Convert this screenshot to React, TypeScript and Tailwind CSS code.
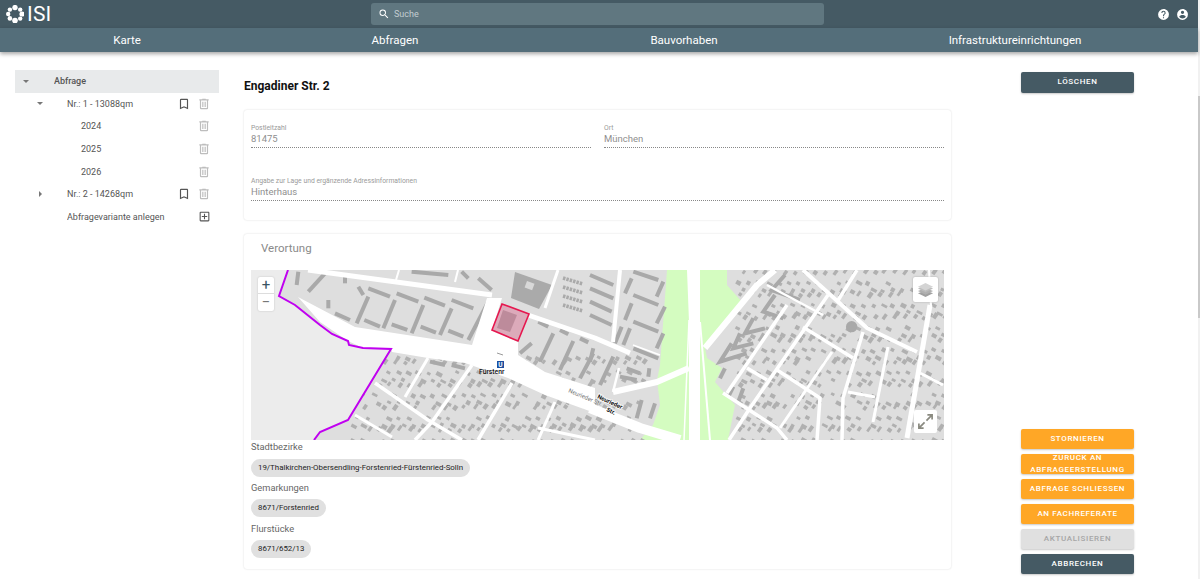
import React from 'react';

const ICONS = {
  trash: 'M9,3V4H4V6H5V19A2,2 0 0,0 7,21H17A2,2 0 0,0 19,19V6H20V4H15V3H9M7,6H17V19H7V6M9,8V17H11V8H9M13,8V17H15V8H13Z',
  bookmark: 'M17,18L12,15.82L7,18V5H17M17,3H7A2,2 0 0,0 5,5V21L12,18L19,21V5C19,3.89 18.1,3 17,3Z',
  plusBox: 'M19,19H5V5H19M19,3H5A2,2 0 0,0 3,5V19A2,2 0 0,0 5,21H19A2,2 0 0,0 21,19V5C21,3.89 20.1,3 19,3M11,7H13V11H17V13H13V17H11V13H7V11H11V7Z',
  help: 'M15.07,11.25L14.17,12.17C13.45,12.89 13,13.5 13,15H11V14.5C11,13.39 11.45,12.39 12.17,11.67L13.41,10.41C13.78,10.05 14,9.55 14,9C14,7.89 13.1,7 12,7A2,2 0 0,0 10,9H8A4,4 0 0,1 12,5A4,4 0 0,1 16,9C16,9.88 15.64,10.67 15.07,11.25M13,19H11V17H13M12,2A10,10 0 0,0 2,12A10,10 0 0,0 12,22A10,10 0 0,0 22,12C22,6.47 17.5,2 12,2Z',
  account: 'M12,19.2C9.5,19.2 7.29,17.92 6,16C6.03,14 10,12.9 12,12.9C14,12.9 17.97,14 18,16C16.71,17.92 14.5,19.2 12,19.2M12,5A3,3 0 0,1 15,8A3,3 0 0,1 12,11A3,3 0 0,1 9,8A3,3 0 0,1 12,5M12,2A10,10 0 0,0 2,12A10,10 0 0,0 12,22A10,10 0 0,0 22,12C22,6.47 17.5,2 12,2Z',
  magnify: 'M9.5,3A6.5,6.5 0 0,1 16,9.5C16,11.11 15.41,12.59 14.44,13.73L14.71,14H15.5L20.5,19L19,20.5L14,15.5V14.71L13.73,14.44C12.59,15.41 11.11,16 9.5,16A6.5,6.5 0 0,1 3,9.5A6.5,6.5 0 0,1 9.5,3M9.5,5C7,5 5,7 5,9.5C5,12 7,14 9.5,14C12,14 14,12 14,9.5C14,7 12,5 9.5,5Z',
};

function Mdi({ d, className }: { d: string; className: string }) {
  return (
    <svg viewBox="0 0 24 24" className={className} fill="currentColor">
      <path d={d} />
    </svg>
  );
}

function Logo() {
  const dots = [
    [9, 2.6, 2.7], [14.2, 4.6, 2.2], [16, 9, 2.6], [14.2, 13.6, 2.2],
    [9, 15.6, 2.8], [3.9, 13.4, 2.3], [2.2, 9, 2.2], [3.9, 4.6, 2.2],
  ];
  return (
    <svg viewBox="0 0 18 18" className="w-[18px] h-[18px]" fill="white">
      {dots.map(([x, y, r], i) => <circle key={i} cx={x} cy={y} r={r} />)}
    </svg>
  );
}

function TreeRow({ indent, caret, label, bold, bookmark, action = 'trash', active }: {
  indent: string;
  caret?: 'down' | 'right';
  label: string;
  bold?: boolean;
  bookmark?: boolean;
  action?: 'trash' | 'plus' | 'none';
  active?: boolean;
}) {
  return (
    <div className={`h-[22.6px] flex items-center text-[9px] text-[#555] ${active ? 'bg-[#e8eaeb]' : ''} ${bold ? 'font-medium' : ''}`}>
      <div className={`flex items-center ${indent}`}>
        <div className="w-[8px] flex justify-center">
          {caret === 'down' && <div className="w-0 h-0 border-x-[3px] border-x-transparent border-t-[3px] border-t-[#777]" />}
          {caret === 'right' && <div className="w-0 h-0 border-y-[3px] border-y-transparent border-l-[3px] border-l-[#777]" />}
        </div>
      </div>
      <span className="flex-1 truncate pt-[1.5px]">{label}</span>
      {bookmark && <Mdi d={ICONS.bookmark} className="w-[14px] h-[14px] text-[#555] mr-[6px]" />}
      {action === 'trash' && <Mdi d={ICONS.trash} className="w-[14px] h-[14px] text-[#bdbdbd] mr-[8px]" />}
      {action === 'plus' && <Mdi d={ICONS.plusBox} className="w-[13px] h-[13px] text-[#555] mr-[8px]" />}
    </div>
  );
}

function Field({ label, value, className }: { label: string; value: string; className: string }) {
  return (
    <div className={className}>
      <div className="text-[6.8px] leading-[9px] text-[#9a9a9a]">{label}</div>
      <div className="text-[9.5px] leading-[13px] -mt-[1px] text-[#8f8f8f]">{value}</div>
      <div className="mt-[2px] border-b border-dotted border-[#888]" />
    </div>
  );
}

function Chip({ children }: { children: React.ReactNode }) {
  return (
    <div className="self-start h-[18px] rounded-full bg-[#e0e0e0] px-[7px] flex items-center text-[7.9px] text-[#222]">
      {children}
    </div>
  );
}

function Btn({ children, kind = 'orange', leading }: { children: React.ReactNode; kind?: 'orange' | 'dark' | 'off'; leading?: boolean }) {
  const look = kind === 'orange'
    ? 'bg-[#ffa726] text-white'
    : kind === 'dark'
      ? 'bg-[#455a64] text-white'
      : 'bg-[#e0e0e0] text-[#a6a6a6]';
  return (
    <div className={`w-[113px] h-[20.5px] rounded-[2px] flex items-center justify-center text-center text-[8px] uppercase tracking-[0.08em] font-medium overflow-hidden shadow-[0_1px_2px_rgba(0,0,0,0.22)] ${leading ? 'leading-[12px]' : ''} ${look}`}>
      {children}
    </div>
  );
}

// deterministic house scatter for the map
function houses() {
  const out: React.ReactNode[] = [];
  let seed = 17;
  const rnd = () => {
    seed = (seed * 16807) % 2147483647;
    return seed / 2147483647;
  };
  const cols = 62;
  const rows = 24;
  for (let c = 0; c < cols; c++) {
    for (let r = 0; r < rows; r++) {
      const x = 100 + c * 10 + (r % 2) * 5 + rnd() * 2;
      const y = 2 + r * 7.5 + rnd() * 2;
      if (x > 693) continue;
      if (y < 82 && x < 470) continue;
      if (x > 395 && x < 482) continue;
      if (x > 340 && x < 400 && y > 110 && y < 130) continue;
      if (rnd() < 0.18) continue;
      const w = 3.5 + rnd() * 3;
      const h = 2.6 + rnd() * 1.8;
      const a = r % 3 === 0 ? -55 : 28;
      out.push(<rect key={`${c}-${r}`} x={x} y={y} width={w} height={h} transform={`rotate(${a} ${x} ${y})`} fill="#b0b0b0" />);
    }
  }
  return out;
}

const SLABS_LEFT = [
  [370, 95, 335, 175], [450, 105, 415, 190], [535, 120, 500, 205], [620, 130, 585, 210], [730, 110, 670, 225],
  [370, 70, 435, 95], [455, 85, 520, 110], [538, 98, 600, 122], [620, 105, 685, 130],
  [270, 145, 315, 165], [358, 165, 405, 185], [440, 178, 487, 195], [527, 185, 573, 203], [610, 197, 655, 215],
  [250, 105, 250, 130], [240, 25, 190, 80], [160, 20, 155, 60], [300, 30, 300, 55], [340, 65, 355, 90],
  [500, 20, 610, 30], [650, 20, 670, 40], [700, 40, 740, 75],
  [860, 235, 825, 265], [925, 205, 885, 290], [985, 228, 945, 315], [1045, 265, 1005, 340],
  [880, 170, 910, 185], [945, 195, 970, 208], [1005, 220, 1030, 232],
  [555, 290, 600, 300], [620, 300, 660, 310],
];

const SLABS_RIGHT = [
  [0, 30, 70, 60], [0, 70, 70, 100], [0, 110, 65, 140], [0, 150, 65, 180],
  [125, 40, 105, 85], [130, 20, 205, 45], [220, 50, 200, 95], [130, 90, 205, 120],
  [125, 115, 105, 165], [225, 125, 200, 175], [130, 170, 205, 200], [220, 205, 200, 250],
  [130, 250, 205, 280], [75, 235, 95, 185], [100, 240, 120, 190], [70, 275, 30, 360],
  [10, 250, 0, 290], [110, 310, 150, 325], [90, 335, 140, 345], [178, 310, 175, 335],
  [155, 405, 140, 460], [195, 415, 180, 460], [430, 365, 415, 395], [460, 370, 445, 410],
  [405, 310, 390, 340],
];

const U_SHAPES = [
  '585,30 545,75 630,105', '555,90 520,140 580,160', '490,160 465,205 525,190',
  '450,205 430,250 490,235', '425,235 390,290 470,265',
];

const ROADS: [string, number][] = [
  ['57,0 241,25', 5], ['277,45 344,68 379,83', 5], ['369,0 362,72', 4],
  ['362,122 406,112 438,98', 6], ['339,138 389,158 429,170', 10], ['368,98 362,122', 2.5], ['382,75 409,85', 1.5],
  ['524,0 506,15 454,78', 6], ['516,15 572,45', 2.5], ['552,0 616,58 666,82', 4], ['606,0 586,32', 3.5],
  ['536,35 476,123', 3.5], ['577,25 499,138 478,170', 3.5], ['552,57 602,88', 3.5], ['472,123 526,158 536,170', 3.5],
  ['496,98 516,110', 3.5], ['526,100 569,128 566,170', 3.5], ['581,82 529,158', 3], ['612,62 592,128 591,170', 3.5],
  ['679,35 656,168', 5], ['637,77 622,152', 3], ['597,122 624,127', 3], ['669,103 692,115', 3],
  ['177,88 154,127', 3], ['221,95 181,152 164,170', 3.5], ['261,113 227,170', 3.5], ['304,132 287,170', 3],
  ['124,113 177,150 211,170', 3.5], ['104,145 141,167', 3], ['287,158 344,170', 3],
  ['148,0 145,10', 2], ['207,0 204,12', 2], ['307,0 294,38', 3], ['678,0 680,36', 2],
  ['449,52 459,170', 2], ['438,50 433,170', 1.5],
];

function MapArt() {
  return (
    <svg viewBox="0 0 693 170" className="w-full h-full block" preserveAspectRatio="none">
      <rect width="693" height="170" fill="#dedede" />
      <polygon points="416,0 438,0 438,170 389,170 402,155 409,135 406,110 409,95" fill="#d4fcc0" />
      <polygon points="449,0 476,0 476,15 491,32 454,78 456,88 471,98 464,112 484,135 477,170 449,170" fill="#d4fcc0" />
      {houses()}
      {/* large building + terraces at top */}
      <polygon points="264,2 301,15 288,39 260,28" fill="#aaa" />
      <rect x="276" y="11" width="8" height="7" fill="#d8d8d8" transform="rotate(20 276 11)" />
      {[6, 15, 24, 33].map(o => (
        <line key={o} x1={312} y1={o + 2} x2={332} y2={o + 8} stroke="#aaa" strokeWidth="3.5" strokeDasharray="2.5 1" />
      ))}
      <g transform="translate(-6 -5) scale(0.3333)" stroke="#a9a9a9" strokeWidth="12">
        {SLABS_LEFT.map(([a, b, c, d], i) => <line key={i} x1={a} y1={b} x2={c} y2={d} />)}
      </g>
      <g transform="translate(339 -5) scale(0.3333)" stroke="#a9a9a9" strokeWidth="12" fill="none">
        {SLABS_RIGHT.map(([a, b, c, d], i) => <line key={i} x1={a} y1={b} x2={c} y2={d} />)}
        {U_SHAPES.map((p, i) => <polyline key={i} points={p} />)}
        <circle cx="785" cy="185" r="17" fill="#a9a9a9" stroke="none" />
      </g>
      {/* empty area in the south west */}
      <polygon points="0,0 37,0 28,26 44,35 69,55 81,64 97,71 98,75 112,78 140,79 97,150 69,162 63,170 0,170" fill="#ececec" />
      {/* main road */}
      <polygon points="47,27 104,57 221,75 236,28 251,28 241,60 267,72 267,85 294,102 344,118 344,143 294,125 257,108 214,93 177,88 141,82 140,79 112,78 97,71 69,52" fill="white" />
      <polygon points="436,0 449,0 449,170 438,170 438,52" fill="white" />
      <g fill="none" stroke="white" strokeLinejoin="round">
        {ROADS.map(([p, w], i) => <polyline key={i} points={p} strokeWidth={w} />)}
      </g>
      <polyline points="37,0 28,26 44,35 69,55 81,64 97,71 98,75 112,78 140,79 97,150 69,162 63,170" fill="none" stroke="#c000f0" strokeWidth="2" />
      <polygon points="252,40 266,45 259,62 246,58" fill="#b4b4b4" />
      <polygon points="251,34 278,44 267,71 241,60" fill="rgba(214,30,90,0.27)" stroke="#e6174f" strokeWidth="1.6" />
      {/* labels */}
      <line x1="246" y1="83" x2="252" y2="85" stroke="#999" strokeWidth="1" />
      <rect x="246" y="91" width="7" height="7" fill="#1c4fa0" />
      <text x="249.5" y="97" textAnchor="middle" fontSize="6.5" fontWeight="700" fill="white" fontFamily="Roboto, sans-serif">U</text>
      <text x="228" y="104" fontSize="6.8" fontWeight="500" fill="#111" fontFamily="Roboto, sans-serif">Fürstenr</text>
      <text x="317" y="122" fontSize="6" fill="#777" fontFamily="Roboto, sans-serif" transform="rotate(23 317 122)">Neurieder Str.</text>
      <text x="346" y="128" fontSize="6" fontWeight="700" fill="#111" fontFamily="Roboto, sans-serif" stroke="white" strokeWidth="1.6" paintOrder="stroke" transform="rotate(25 346 128)">Neurieder</text>
      <text x="355" y="141" fontSize="6" fontWeight="700" fill="#111" fontFamily="Roboto, sans-serif" stroke="white" strokeWidth="1.6" paintOrder="stroke" transform="rotate(25 355 141)">Str.</text>
    </svg>
  );
}

export default function App() {
  return (
    <div className="w-[1200px] h-[579px] overflow-hidden flex bg-white font-['Roboto',sans-serif]">
      <div className="w-[1198px] flex flex-col">
        <header className="h-[28px] bg-[#455a64] flex items-center text-white">
          <div className="w-[371px] flex items-center pl-[6px] gap-[3px]">
            <Logo />
            <span className="text-[21px] leading-none tracking-[0.01em]">ISI</span>
          </div>
          <div className="w-[453px] h-[22px] rounded-[3px] bg-[#607780] flex items-center pl-[7px] gap-[4px] text-[9px] text-[#c3cdd1]">
            <Mdi d={ICONS.magnify} className="w-[12px] h-[12px] text-white" />
            <span className="pt-[2px]">Suche</span>
          </div>
          <div className="flex-1 flex justify-end items-center gap-[6px] pr-[9px]">
            <Mdi d={ICONS.help} className="w-[13px] h-[13px]" />
            <Mdi d={ICONS.account} className="w-[13px] h-[13px]" />
          </div>
        </header>
        <nav className="h-[24px] pt-[1px] bg-[#546e7a] grid grid-cols-[254px_282px_296px_366px] items-center text-center text-white text-[11.5px] shadow-[0_2px_4px_rgba(0,0,0,0.35)] relative">
          <span>Karte</span>
          <span>Abfragen</span>
          <span>Bauvorhaben</span>
          <span>Infrastruktureinrichtungen</span>
        </nav>

        <main className="flex-1 flex min-h-0">
          <aside className="w-[204px] ml-[15px] mt-[18px]">
            <TreeRow indent="ml-[7px] mr-[24px]" caret="down" label="Abfrage" bold action="none" active />
            <TreeRow indent="ml-[21px] mr-[23px]" caret="down" label="Nr.: 1 - 13088qm" bookmark />
            <TreeRow indent="ml-[35px] mr-[23px]" label="2024" />
            <TreeRow indent="ml-[35px] mr-[23px]" label="2025" />
            <TreeRow indent="ml-[35px] mr-[23px]" label="2026" />
            <TreeRow indent="ml-[21px] mr-[23px]" caret="right" label="Nr.: 2 - 14268qm" bookmark />
            <TreeRow indent="ml-[21px] mr-[23px]" label="Abfragevariante anlegen" action="plus" />
          </aside>

          <section className="w-[707px] ml-[25px] flex flex-col">
            <h1 className="mt-[26px] h-[16px] text-[12px] leading-[16px] font-bold text-[#111]">Engadiner Str. 2</h1>
            <div className="mt-[16px] h-[110px] rounded-[3px] bg-white shadow-[0_0_2px_rgba(0,0,0,0.16)] px-[7px] pt-[14px]">
              <div className="flex gap-[13px]">
                <Field label="Postleitzahl" value="81475" className="w-[340px]" />
                <Field label="Ort" value="München" className="w-[340px]" />
              </div>
              <Field label="Angabe zur Lage und ergänzende Adressinformationen" value="Hinterhaus" className="mt-[29px]" />
            </div>
            <div className="mt-[14px] h-[335px] rounded-[3px] bg-white shadow-[0_0_2px_rgba(0,0,0,0.16)] px-[7px] flex flex-col">
              <div className="h-[36px] flex items-center pl-[10px] pb-[12px] pt-[6px] text-[11.5px] text-[#8a8a8a]">Verortung</div>
              <div className="relative h-[170px]">
                <MapArt />
                <div className="absolute left-[7px] top-[7px] w-[16px] rounded-[2px] bg-white flex flex-col items-center text-[#3a5563] shadow-[0_0_2px_rgba(0,0,0,0.2)]">
                  <div className="h-[17px] flex items-center justify-center text-[15px] leading-none border-b border-[#ddd] w-full">+</div>
                  <div className="h-[17px] flex items-center justify-center text-[15px] leading-none w-full text-[#777]">−</div>
                </div>
                <div className="absolute right-[6px] top-[7px] w-[25px] h-[25px] rounded-[2px] bg-white flex items-center justify-center shadow-[0_0_2px_rgba(0,0,0,0.25)]">
                  <svg viewBox="0 0 18 18" className="w-[17px] h-[17px]">
                    <polygon points="9,10 17,13 9,17 1,13" fill="#a0a0a0" />
                    <polygon points="9,7.5 17,10.5 9,14.5 1,10.5" fill="#b0b0b0" />
                    <polygon points="9,5 17,8 9,12 1,8" fill="#bdbdbd" />
                    <polygon points="9,2 17,6 9,10 1,6" fill="#d4d4d4" />
                  </svg>
                </div>
                <div className="absolute right-[7px] bottom-[7px] w-[23px] h-[23px] rounded-[2px] bg-white flex items-center justify-center">
                  <svg viewBox="0 0 18 18" className="w-[17px] h-[17px]" fill="none" stroke="#8a8a80" strokeWidth="1.8">
                    <path d="M11 2h5v5M16 2l-6 6M7 16H2v-5M2 16l6-6" />
                  </svg>
                </div>
              </div>
              <div className="text-[9.3px] leading-[14px] text-[#666] flex flex-col">
                <div>Stadtbezirke</div>
                <div className="mt-[5px] flex"><Chip>19/Thalkirchen-Obersendling-Forstenried-Fürstenried-Solln</Chip></div>
                <div className="mt-[4px]">Gemarkungen</div>
                <div className="mt-[4px] flex"><Chip>8671/Forstenried</Chip></div>
                <div className="mt-[5px]">Flurstücke</div>
                <div className="mt-[4px] flex"><Chip>8671/652/13</Chip></div>
              </div>
            </div>
          </section>

          <aside className="ml-[70px] mt-[20px] mb-[5px] flex flex-col">
            <Btn kind="dark">Löschen</Btn>
            <div className="mt-auto flex flex-col gap-[4.5px]">
              <Btn>Stornieren</Btn>
              <Btn leading>Zurück an Abfrageerstellung</Btn>
              <Btn>Abfrage schliessen</Btn>
              <Btn>An Fachreferate</Btn>
              <Btn kind="off">Aktualisieren</Btn>
              <Btn kind="dark">Abbrechen</Btn>
            </div>
          </aside>
        </main>
      </div>
      <div className="w-[2px] h-full bg-[#f1f1f1] pt-[96px]">
        <div className="h-[222px] bg-[#c9c9c9]" />
      </div>
    </div>
  );
}
